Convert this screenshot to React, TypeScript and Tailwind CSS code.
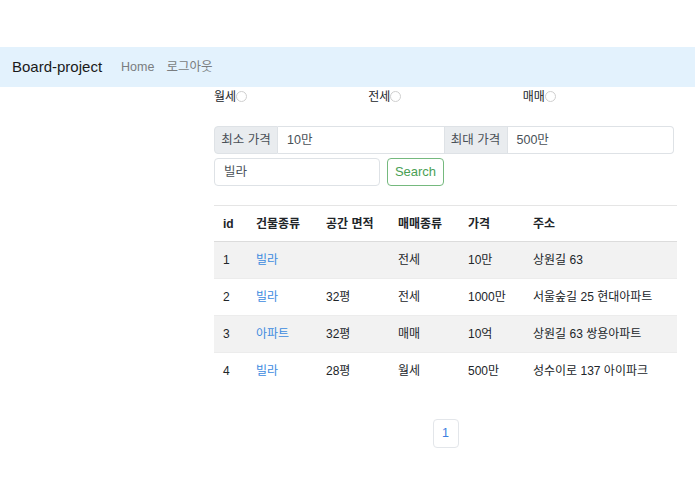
import React from "react";

type Row = {
  id: number;
  kind: string;
  area: string;
  deal: string;
  price: string;
  address: string;
};

const rows: Row[] = [
  { id: 1, kind: "빌라", area: "", deal: "전세", price: "10만", address: "상원길 63" },
  { id: 2, kind: "빌라", area: "32평", deal: "전세", price: "1000만", address: "서울숲길 25 현대아파트" },
  { id: 3, kind: "아파트", area: "32평", deal: "매매", price: "10억", address: "상원길 63 쌍용아파트" },
  { id: 4, kind: "빌라", area: "28평", deal: "월세", price: "500만", address: "성수이로 137 아이파크" },
];

function Radio({ label }: { label: string }) {
  return (
    <label className="flex items-center text-[12px] text-[#212529]">
      {label}
      <span className="inline-block w-[11px] h-[11px] rounded-full border border-[#cfcfcf] bg-white" />
    </label>
  );
}

export default function App() {
  return (
    <div
      className="min-h-[494px] bg-white text-[#212529] overflow-hidden"
      style={{ fontFamily: '"Liberation Sans", "Noto Sans CJK KR", sans-serif' }}
    >
      <div className="h-[47px]" />
      {/* navbar */}
      <nav className="h-[40px] bg-[#e3f2fd] flex items-center px-[12px]">
        <span className="text-[15px] text-[#1a1a1a] mr-[19px]">Board-project</span>
        <span className="text-[12.5px] text-[#7a7d80] mr-[12px]">Home</span>
        <span className="text-[12.5px] text-[#7a7d80]">로그아웃</span>
      </nav>

      <main className="ml-[214px] w-[463px]">
        {/* radios */}
        <div className="grid grid-cols-3 h-[19px] items-center">
          <Radio label="월세" />
          <Radio label="전세" />
          <Radio label="매매" />
        </div>

        {/* price range */}
        <div className="mt-[20px] flex h-[28px] w-[460px] text-[12.5px]">
          <div className="w-[64px] flex items-center justify-center bg-[#e9ecef] border border-[#dee2e6] rounded-l-[4px] text-[#495057]">
            최소 가격
          </div>
          <div className="flex-1 flex items-center px-[9px] border-y border-[#dee2e6] text-[#495057]">
            10만
          </div>
          <div className="w-[64px] flex items-center justify-center bg-[#e9ecef] border border-[#dee2e6] text-[#495057]">
            최대 가격
          </div>
          <div className="flex-1 flex items-center px-[9px] border border-l-0 border-[#dee2e6] rounded-r-[4px] text-[#495057]">
            500만
          </div>
        </div>

        {/* keyword */}
        <div className="mt-[4px] flex h-[28px] text-[12.5px]">
          <div className="w-[166px] flex items-center px-[9px] border border-[#dee2e6] rounded-[4px] text-[#495057]">
            빌라
          </div>
          <button className="ml-[7px] w-[57px] border border-[#75b97e] rounded-[4px] text-[#4a9f55] text-[13px]">
            Search
          </button>
        </div>

        {/* table */}
        <table className="mt-[19px] w-[463px] table-fixed text-[12px] border-t border-[#e5e5e5] border-collapse">
          <thead>
            <tr className="h-[36px] font-bold text-left border-b border-[#dcdcdc]">
              <th className="pl-[9px] w-[42px]">id</th>
              <th className="w-[70px]">건물종류</th>
              <th className="w-[72px]">공간 면적</th>
              <th className="w-[70px]">매매종류</th>
              <th className="w-[65px]">가격</th>
              <th>주소</th>
            </tr>
          </thead>
          <tbody>
            {rows.map((r, i) => (
              <tr
                key={r.id}
                className={`h-[37px] ${i < rows.length - 1 ? "border-b border-[#ececec]" : ""} ${i % 2 === 0 ? "bg-[#f2f2f2]" : "bg-white"}`}
              >
                <td className="pl-[9px]">{r.id}</td>
                <td className="text-[#3d8bdf]">{r.kind}</td>
                <td>{r.area}</td>
                <td>{r.deal}</td>
                <td>{r.price}</td>
                <td className="whitespace-nowrap">{r.address}</td>
              </tr>
            ))}
          </tbody>
        </table>

        {/* pagination */}
        <div className="mt-[29px] flex justify-center">
          <button className="w-[26px] h-[29px] border border-[#e3e6ea] rounded-[4px] text-[12.5px] text-[#3d7fe0] bg-white">
            1
          </button>
        </div>
      </main>
    </div>
  );
}
